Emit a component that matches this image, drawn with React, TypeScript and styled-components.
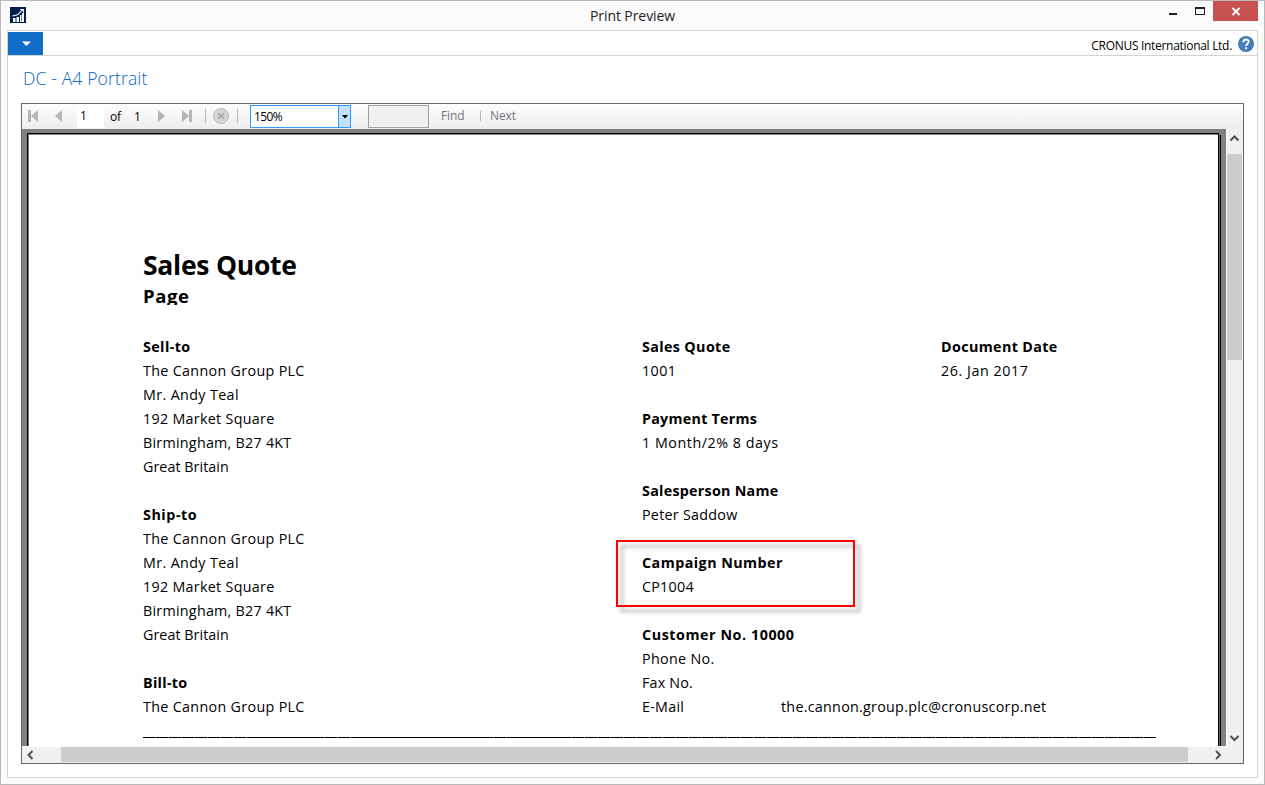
import React from "react";
import styled, { createGlobalStyle } from "styled-components";

const Global = createGlobalStyle`
  *, *::before, *::after { box-sizing: border-box; }
  html, body { margin: 0; padding: 0; overflow: hidden; background: #fbfbfb; }
  body { font-family: "Open Sans", "Noto Sans", sans-serif; color: #000; }
`;

const Window = styled.div`
  width: 1265px;
  height: 785px;
  border: 1px solid #b9b9b9;
  background: #fbfbfb;
  padding: 0 6px 6px 6px;
  display: flex;
  flex-direction: column;
`;

const TitleBar = styled.header`
  height: 29px;
  flex: none;
  display: grid;
  grid-template-columns: 1fr auto 1fr;
  align-items: start;
`;

const AppIcon = styled.svg`
  margin: 6px 0 0 3px;
  display: block;
`;

const Title = styled.div`
  font-size: 14px;
  line-height: 19px;
  margin-top: 5px;
  letter-spacing: -0.08px;
  color: #222;
`;

const WindowButtons = styled.div`
  display: flex;
  justify-content: flex-end;
`;

const WindowButton = styled.div<{ $w: number; $close?: boolean }>`
  width: ${(p) => p.$w}px;
  height: 20px;
  background: ${(p) => (p.$close ? "#c75050" : "transparent")};
  svg { display: block; }
`;

const Content = styled.main`
  flex: 1;
  min-height: 0;
  border: 1px solid #d2d2d2;
  background: #fff;
  display: flex;
  flex-direction: column;
`;

const Ribbon = styled.div`
  height: 25px;
  flex: none;
  border-bottom: 1px solid #d2d2d2;
  padding: 1px 3px 0 0;
  display: flex;
  justify-content: space-between;
`;

const MenuButton = styled.button`
  width: 35px;
  height: 23px;
  border: 0;
  padding: 0;
  background: #106ec8;
  svg { display: block; }
`;

const Company = styled.div`
  display: flex;
  align-items: flex-start;
  gap: 6px;
  font-size: 12px;
  line-height: 17px;
  letter-spacing: -0.3px;
  span { padding-top: 5px; }
  svg { display: block; margin-top: 4px; }
`;

const Heading = styled.h1`
  margin: 0;
  padding: 10px 0 0 15px;
  height: 47px;
  flex: none;
  font-size: 17.5px;
  line-height: 24px;
  font-weight: 300;
  letter-spacing: 0.15px;
  color: #0a66c0;
`;

const Viewer = styled.section`
  margin: 0 13px 13px 13px;
  flex: 1;
  min-height: 0;
  border: 1px solid #6b6669;
  display: flex;
  flex-direction: column;
`;

const Toolbar = styled.div`
  height: 25px;
  flex: none;
  display: flex;
  background: linear-gradient(#fdfdfd, #ededed);
  font-size: 12px;
  line-height: 16px;
`;

const ToolIcon = styled.div<{ $w: number }>`
  width: ${(p) => p.$w}px;
  flex: none;
  svg { display: block; }
`;

const PageBox = styled.div`
  width: 27px;
  height: 23px;
  margin: 1px 6px 0 0;
  background: #fff;
  padding: 3px 0 0 3px;
`;

const ToolText = styled.div<{ $w: number; $muted?: boolean; $gap?: number }>`
  width: ${(p) => p.$w}px;
  margin-left: ${(p) => p.$gap ?? 0}px;
  flex: none;
  padding-top: ${(p) => (p.$muted ? 4 : 5)}px;
  white-space: nowrap;
  letter-spacing: -0.1px;
  color: ${(p) => (p.$muted ? "#78747c" : "#000")};
`;

const Separator = styled.div<{ $h?: number }>`
  width: 1px;
  height: ${(p) => p.$h ?? 14}px;
  margin-top: ${(p) => (p.$h ? 7 : 5)}px;
  background: #b9b9b9;
`;

const ZoomSelect = styled.div`
  width: 101px;
  height: 23px;
  margin: 1px 0 0 12px;
  border: 1px solid #3399ff;
  background: #fff;
  display: flex;
  justify-content: space-between;
  padding-left: 3px;
  line-height: 22px;
  letter-spacing: -0.6px;
`;

const ZoomArrow = styled.div`
  width: 12px;
  border-left: 1px solid #3399ff;
  background: #c4e0ff;
  svg { display: block; }
`;

const FindBox = styled.div`
  width: 61px;
  height: 23px;
  margin: 1px 12px 0 17px;
  border: 1px solid #a0a0a0;
  background: #f0f0f0;
`;

const Body = styled.div`
  flex: 1;
  min-height: 0;
  display: grid;
  grid-template-columns: 1205px 16px;
  grid-template-rows: 617px 17px;
`;

const Desk = styled.div`
  background: #808080;
  padding: 4px 0 0 5px;
  border-right: 1px solid #fff;
  overflow: hidden;
`;

const Sheet = styled.div`
  height: 620px;
  width: 1192px;
  background: #fff;
  border-style: solid;
  border-color: #000;
  border-width: 1px 1px 0 1px;
  box-shadow: inset 1px 1px 0 #808080, 1px 2px 0 #606060, 2px 2px 0 #000;
  padding: 114px 0 0 115px;
`;

const SheetTitle = styled.h2`
  margin: 0;
  font-size: 26.5px;
  line-height: 34px;
  font-weight: 700;
  letter-spacing: -0.25px;
`;

const SheetSubtitle = styled.div`
  font-size: 18.5px;
  line-height: 26px;
  height: 23px;
  padding-top: 1px;
  overflow: hidden;
  font-weight: 700;
  letter-spacing: 0.6px;
`;

const Columns = styled.div`
  margin-top: 30px;
  height: 384px;
  display: grid;
  grid-template-columns: 499px 299px 1fr;
`;

const Line = styled.div<{ $bold?: boolean; $ls?: number }>`
  height: 24px;
  line-height: 24px;
  font-size: 14.3px;
  white-space: pre;
  font-weight: ${(p) => (p.$bold ? 700 : 400)};
  letter-spacing: ${(p) => p.$ls ?? 0.3}px;
`;

const ContactLine = styled(Line)`
  display: grid;
  grid-template-columns: 139px auto;
`;

const Highlight = styled.div`
  position: relative;
  &::after {
    content: "";
    position: absolute;
    left: -26px;
    top: -11px;
    width: 239px;
    height: 67px;
    border: 2px solid #f00;
    filter: drop-shadow(5px 5px 2px rgba(0, 0, 0, 0.35));
  }
`;

const Rule = styled.div`
  width: 1013px;
  height: 1px;
  margin-top: 18px;
  background: repeating-linear-gradient(90deg, #000 0 6px, #777 6px 6.5px);
`;

const VScroll = styled.div`
  background: #f0f0f0;
  display: flex;
  flex-direction: column;
  svg { display: block; flex: none; }
`;

const VThumb = styled.div`
  width: 15px;
  height: 206px;
  margin-bottom: auto;
  background: #cdcdcd;
`;

const HScroll = styled.div`
  background: #f0f0f0;
  border-top: 1px solid #fff;
  display: flex;
  svg { display: block; flex: none; }
`;

const HThumb = styled.div`
  width: 1127px;
  height: 15px;
  margin: 0 auto 0 22px;
  background: #cdcdcd;
`;

const Corner = styled.div`
  background: #f0f0f0;
`;

type LineItem = { text: string; bold?: boolean; ls?: number };

const address: LineItem[] = [
  { text: "The Cannon Group PLC", ls: 0.33 },
  { text: "Mr. Andy Teal", ls: 0.37 },
  { text: "192 Market Square", ls: 0.3 },
  { text: "Birmingham, B27 4KT", ls: 0.26 },
  { text: "Great Britain", ls: 0.05 },
  { text: "" },
];

const leftLines: LineItem[] = [
  { text: "Sell-to", bold: true, ls: 0.4 },
  ...address,
  { text: "Ship-to", bold: true, ls: 0.55 },
  ...address,
  { text: "Bill-to", bold: true, ls: 0.3 },
  address[0],
];

const midLines: LineItem[] = [
  { text: "Sales Quote", bold: true, ls: 0.37 },
  { text: "1001", ls: 0.4 },
  { text: "" },
  { text: "Payment Terms", bold: true, ls: 0.25 },
  { text: "1 Month/2% 8 days", ls: 0.53 },
  { text: "" },
  { text: "Salesperson Name", bold: true, ls: 0.27 },
  { text: "Peter Saddow", ls: 0.27 },
  { text: "" },
];

const customerLines: LineItem[] = [
  { text: "" },
  { text: "Customer No. 10000", bold: true, ls: 0.56 },
  { text: "Phone No.", ls: 0.32 },
  { text: "Fax No.", ls: 0.2 },
];

const dateLines: LineItem[] = [
  { text: "Document Date", bold: true, ls: 0.37 },
  { text: "26. Jan 2017", ls: 0.55 },
];

const Lines = ({ items }: { items: LineItem[] }) => (
  <>
    {items.map((item, i) => (
      <Line key={i} $bold={item.bold} $ls={item.ls}>{item.text}</Line>
    ))}
  </>
);

export default function App() {
  return (
    <>
      <Global />
      <Window>
        <TitleBar>
          <AppIcon width="16" height="16" viewBox="0 0 16 16">
            <path fill="#001e50" d="M0 0h16v16H0z" />
            <path fill="#fff" d="M3 11h2.500v4H3zM6.500 10h2.500v5H6.500zM10 8h1.500v7H10zM12 6h2v9h-2z" />
            <path d="M2.500 9 7.500 7.800l5-5M10.300 2.500H13.500V5.500" fill="none" stroke="#fff" strokeWidth="1.100" />
          </AppIcon>
          <Title>Print Preview</Title>
          <WindowButtons>
            <WindowButton $w={28}>
              <svg width="28" height="20"><path d="M5 12h8v2H5z" fill="#222" /></svg>
            </WindowButton>
            <WindowButton $w={21}>
              <svg width="21" height="20"><path fillRule="evenodd" d="M3 6h10v8H3zM4 8v5h8V8z" fill="#222" /></svg>
            </WindowButton>
            <WindowButton $w={45} $close>
              <svg width="45" height="20"><path d="m19.500 7 7 7M26.500 7l-7 7" stroke="#fff" strokeWidth="1.800" /></svg>
            </WindowButton>
          </WindowButtons>
        </TitleBar>
        <Content>
          <Ribbon>
            <MenuButton aria-label="Menu">
              <svg width="35" height="23"><path d="M14 9.500h9L18.500 14z" fill="#fff" /></svg>
            </MenuButton>
            <Company>
              <span>CRONUS International Ltd.</span>
              <svg width="16" height="16" viewBox="0 0 16 16">
                <circle cx="8" cy="8" r="8" fill="#457cb9" />
                <path d="M5.300 6.200C5.300 2.700 10.700 2.700 10.700 5.800c0 1.900-2.600 2-2.600 4.200M8.100 11.300v2" fill="none" stroke="#fff" strokeWidth="1.900" />
              </svg>
            </Company>
          </Ribbon>
          <Heading>DC - A4 Portrait</Heading>
          <Viewer>
            <Toolbar>
              <ToolIcon $w={28}>
                <svg width="28" height="24"><path d="M6 6h3v12H6zM16 6v12l-7-6z" fill="#b4b4b4" /></svg>
              </ToolIcon>
              <ToolIcon $w={27}>
                <svg width="27" height="24"><path d="M12 6v12l-7-6z" fill="#b4b4b4" /></svg>
              </ToolIcon>
              <PageBox>1</PageBox>
              <ToolText $w={24}>of</ToolText>
              <ToolText $w={22}>1</ToolText>
              <ToolIcon $w={25}>
                <svg width="25" height="24"><path d="M2 6v12l7-6z" fill="#b4b4b4" /></svg>
              </ToolIcon>
              <ToolIcon $w={24}>
                <svg width="24" height="24"><path d="M1 6v12l7-6zM8 6h3v12H8z" fill="#b4b4b4" /></svg>
              </ToolIcon>
              <Separator />
              <ToolIcon $w={31}>
                <svg width="31" height="24">
                  <circle cx="15" cy="12" r="7.500" fill="#d6d6d6" stroke="#b8b8b8" />
                  <path d="m12 9.500 6 5M18 9.500l-6 5" stroke="#aaa" strokeWidth="2" />
                </svg>
              </ToolIcon>
              <Separator />
              <ZoomSelect>
                150%
                <ZoomArrow>
                  <svg width="11" height="21"><path d="M3 9h6l-3 3.500z" fill="#000" /></svg>
                </ZoomArrow>
              </ZoomSelect>
              <FindBox />
              <ToolText $w={39} $muted>Find</ToolText>
              <Separator $h={10} />
              <ToolText $w={40} $muted $gap={9}>Next</ToolText>
            </Toolbar>
            <Body>
              <Desk>
                <Sheet>
                  <SheetTitle>Sales Quote</SheetTitle>
                  <SheetSubtitle>Page</SheetSubtitle>
                  <Columns>
                    <div><Lines items={leftLines} /></div>
                    <div>
                      <Lines items={midLines} />
                      <Highlight>
                        <Line $bold $ls={0.46}>Campaign Number</Line>
                        <Line $ls={0.25}>CP1004</Line>
                      </Highlight>
                      <Lines items={customerLines} />
                      <ContactLine $ls={0.27}>
                        <span>E-Mail</span>
                        <span>the.cannon.group.plc@cronuscorp.net</span>
                      </ContactLine>
                    </div>
                    <div><Lines items={dateLines} /></div>
                  </Columns>
                  <Rule />
                </Sheet>
              </Desk>
              <VScroll>
                <svg width="16" height="25"><path d="m3.500 11.500 4-4 4 4" fill="none" stroke="#505050" strokeWidth="2" /></svg>
                <VThumb />
                <svg width="16" height="17"><path d="m3.500 7 4 4 4-4" fill="none" stroke="#505050" strokeWidth="2" /></svg>
              </VScroll>
              <HScroll>
                <svg width="17" height="16"><path d="m10.500 4-4 4 4 4" fill="none" stroke="#505050" strokeWidth="2" /></svg>
                <HThumb />
                <svg width="18" height="16"><path d="m7 4 4 4-4 4" fill="none" stroke="#505050" strokeWidth="2" /></svg>
              </HScroll>
              <Corner />
            </Body>
          </Viewer>
        </Content>
      </Window>
    </>
  );
}
